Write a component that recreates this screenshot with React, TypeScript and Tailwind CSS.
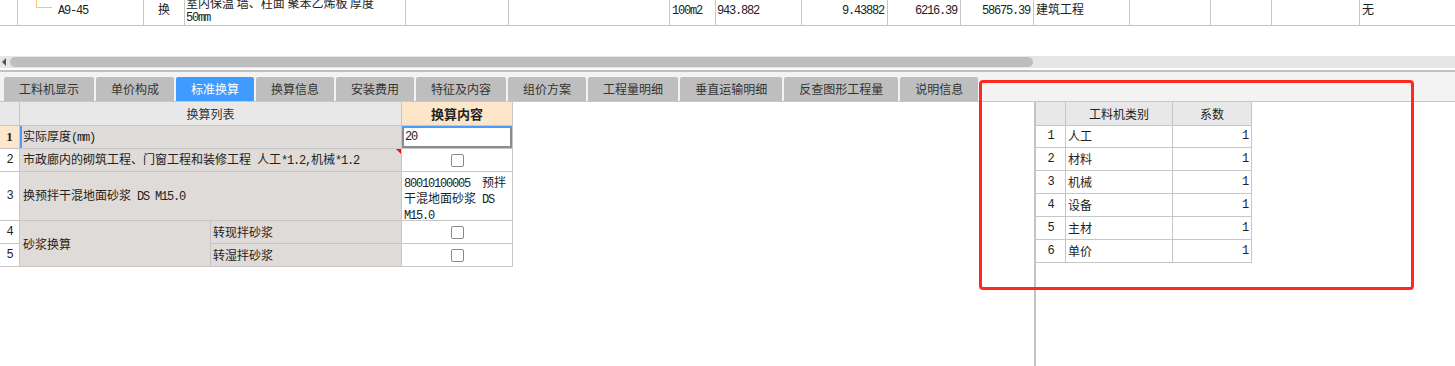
import React from "react";

const CJK = "font-['Noto_Sans_CJK_SC',sans-serif]";

function Mx({ t }: { t: string }) {
  const parts = t.split(/([\x20-\x7e]+)/).filter((p) => p.length > 0);
  return (
    <>
      {parts.map((p, i) =>
        /^[\x20-\x7e]+$/.test(p) ? (
          <span
            key={i}
            className="font-['Liberation_Mono',monospace] text-[12px] tracking-[-1.2px] whitespace-pre"
          >
            {p}
          </span>
        ) : (
          <span key={i}>{p}</span>
        )
      )}
    </>
  );
}

const G = "border-[#c6c6c6]";

function TopCell({
  w,
  children,
  cls = "",
}: {
  w: string;
  children?: React.ReactNode;
  cls?: string;
}) {
  return (
    <div className={`${w} shrink-0 h-full border-r ${G} overflow-hidden relative ${cls}`}>
      {children}
    </div>
  );
}

function Checkbox() {
  return <span className="block w-[13px] h-[13px] rounded-[2px] border border-[#8a8a8a] bg-white" />;
}

const tabs = [
  "工料机显示",
  "单价构成",
  "标准换算",
  "换算信息",
  "安装费用",
  "特征及内容",
  "组价方案",
  "工程量明细",
  "垂直运输明细",
  "反查图形工程量",
  "说明信息",
];

const rightRows = ["人工", "材料", "机械", "设备", "主材", "单价"];

export default function App() {
  return (
    <div className={`relative w-[1455px] h-[366px] overflow-hidden bg-white ${CJK} text-[12px] text-[#222]`}>
      {/* top grid row */}
      <div className={`flex h-[26px] border-b ${G} leading-[13px]`}>
        <TopCell w="w-[18px]" />
        <TopCell w="w-[126px]">
          <span className="absolute left-[18px] top-0 w-[16px] h-[8px] border-l border-b border-[#f3c47a]" />
          <span className="absolute left-[40px] top-[2px]">
            <Mx t="A9-45" />
          </span>
        </TopCell>
        <TopCell w="w-[41px]" cls="flex justify-center pt-[2px]">
          换
        </TopCell>
        <TopCell w="w-[221px]" cls="pl-[1px]">
          <div className="mt-[-4px] leading-[13px]">
            室内保温 墙、柱面 聚苯乙烯板 厚度
            <br />
            <Mx t="50mm" />
          </div>
        </TopCell>
        <TopCell w="w-[103px]" />
        <TopCell w="w-[161px]" />
        <TopCell w="w-[46px]" cls="pl-[2px] pt-[2px]">
          <Mx t="100m2" />
        </TopCell>
        <TopCell w="w-[86px]" cls="pl-[1px] pt-[2px]">
          <Mx t="943.882" />
        </TopCell>
        <TopCell w="w-[86px]" cls="text-right pr-[3px] pt-[2px]">
          <Mx t="9.43882" />
        </TopCell>
        <TopCell w="w-[73px]" cls="text-right pr-[3px] pt-[2px]">
          <Mx t="6216.39" />
        </TopCell>
        <TopCell w="w-[73px]" cls="text-right pr-[3px] pt-[2px]">
          <Mx t="58675.39" />
        </TopCell>
        <TopCell w="w-[96px]" cls="pl-[2px] pt-[2px]">
          建筑工程
        </TopCell>
        <TopCell w="w-[81px]" />
        <TopCell w="w-[61px]" />
        <TopCell w="w-[88px]" />
        <div className="flex-1 pl-[2px] pt-[2px]">无</div>
      </div>

      {/* blank area */}
      <div className="h-[30px]" />

      {/* horizontal scrollbar */}
      <div className="h-[12px] bg-[#e6e6e6] flex items-center">
        <span className="ml-[2px] w-0 h-0 border-y-[4px] border-y-transparent border-r-[4px] border-r-[#555]" />
        <span className="ml-[4px] w-[1023px] h-[10px] rounded-[5px] bg-[#bebebe]" />
      </div>
      <div className="h-[2px] bg-white" />
      <div className="h-[2px] bg-[#bfbfbf]" />

      {/* tab bar */}
      <div className={`h-[30px] bg-[#f3f3f3] border-b ${G} flex items-end pl-[4px] gap-[2px]`}>
        {tabs.map((t) => (
          <div
            key={t}
            className={`h-[24px] px-[15px] flex items-center rounded-t-[2px] leading-none ${
              t === "标准换算" ? "bg-[#3f9bff] text-white" : "bg-[#bebebe] text-[#333]"
            }`}
          >
            {t}
          </div>
        ))}
      </div>

      {/* content area */}
      <div className="flex h-[264px]">
        {/* left panel */}
        <div className="w-[1034px] shrink-0 bg-white">
          <div className="grid grid-cols-[20px_191px_191px_111px] grid-rows-[24px_23px_23px_49px_23px_23px] w-[513px] leading-[14px]">
            {/* header */}
            <div className={`col-start-1 row-start-1 bg-[#e8e8e8] border-r border-b ${G}`} />
            <div className={`col-start-2 col-span-2 row-start-1 bg-[#e8e8e8] border-r border-b ${G} flex items-center justify-center text-[#333]`}>
              换算列表
            </div>
            <div className={`col-start-4 row-start-1 bg-[#fde6c9] border-r border-b ${G} flex items-center justify-center text-[13px] font-bold text-[#222]`}>
              换算内容
            </div>

            {/* row 1 */}
            <div className={`col-start-1 row-start-2 bg-[#fde6c9] border-r border-b ${G} flex items-center justify-center font-bold font-['Liberation_Serif',serif] text-[13px]`}>
              1
            </div>
            <div className={`col-start-2 col-span-2 row-start-2 bg-[#dfdbd8] border-r border-b ${G} flex items-center pl-[3px] shadow-[inset_2px_0_0_#4a9dff]`}>
              <span>
                实际厚度<Mx t="(mm)" />
              </span>
            </div>
            <div className={`col-start-4 row-start-2 bg-white border-r border-b ${G} flex items-center pl-[3px] shadow-[inset_0_2px_0_#4a9dff,inset_2px_0_0_#8c8c8c,inset_-2px_0_0_#8c8c8c,inset_0_-2px_0_#8c8c8c]`}>
              <Mx t="20" />
            </div>

            {/* row 2 */}
            <div className={`col-start-1 row-start-3 bg-white border-r border-b ${G} flex items-center justify-center`}>
              <Mx t="2" />
            </div>
            <div className={`relative col-start-2 col-span-2 row-start-3 bg-[#dfdbd8] border-r border-b ${G} flex items-center pl-[3px] whitespace-nowrap`}>
              <span>
                <Mx t="市政廊内的砌筑工程、门窗工程和装修工程 人工*1.2,机械*1.2" />
              </span>
              <span className="absolute top-0 right-0 w-0 h-0 border-t-[5px] border-t-[#ee1111] border-l-[5px] border-l-transparent" />
            </div>
            <div className={`col-start-4 row-start-3 bg-white border-r border-b ${G} flex items-center justify-center`}>
              <Checkbox />
            </div>

            {/* row 3 */}
            <div className={`col-start-1 row-start-4 bg-white border-r border-b ${G} flex items-center justify-center`}>
              <Mx t="3" />
            </div>
            <div className={`col-start-2 col-span-2 row-start-4 bg-[#dfdbd8] border-r border-b ${G} flex items-center pl-[3px]`}>
              <span>
                <Mx t="换预拌干混地面砂浆 DS M15.0" />
              </span>
            </div>
            <div className={`col-start-4 row-start-4 bg-white border-r border-b ${G} pl-[2px] pt-[3px] whitespace-nowrap`}>
              <Mx t="80010100005  预拌" />
              <br />
              <Mx t="干混地面砂浆 DS" />
              <br />
              <Mx t="M15.0" />
            </div>

            {/* row 4 / 5 */}
            <div className={`col-start-1 row-start-5 bg-white border-r border-b ${G} flex items-center justify-center`}>
              <Mx t="4" />
            </div>
            <div className={`col-start-2 row-start-5 row-span-2 bg-[#dfdbd8] border-r border-b ${G} flex items-center pl-[3px]`}>
              砂浆换算
            </div>
            <div className={`col-start-3 row-start-5 bg-[#dfdbd8] border-r border-b ${G} flex items-center pl-[2px]`}>
              转现拌砂浆
            </div>
            <div className={`col-start-4 row-start-5 bg-white border-r border-b ${G} flex items-center justify-center`}>
              <Checkbox />
            </div>

            <div className={`col-start-1 row-start-6 bg-white border-r border-b ${G} flex items-center justify-center`}>
              <Mx t="5" />
            </div>
            <div className={`col-start-3 row-start-6 bg-[#dfdbd8] border-r border-b ${G} flex items-center pl-[2px]`}>
              转湿拌砂浆
            </div>
            <div className={`col-start-4 row-start-6 bg-white border-r border-b ${G} flex items-center justify-center`}>
              <Checkbox />
            </div>
          </div>
        </div>

        {/* right panel */}
        <div className="flex-1 border-l-2 border-[#c3c3c3] bg-white">
          <div className="grid grid-cols-[30px_107px_79px] auto-rows-[23px] w-[216px] leading-[14px]">
            <div className={`h-[24px] bg-[#e8e8e8] border-r border-b ${G}`} />
            <div className={`h-[24px] bg-[#e8e8e8] border-r border-b ${G} flex items-center justify-center`}>
              工料机类别
            </div>
            <div className={`h-[24px] bg-[#e8e8e8] border-r border-b ${G} flex items-center justify-center`}>
              系数
            </div>
            {rightRows.map((r, i) => (
              <React.Fragment key={r}>
                <div className={`border-r border-b ${G} flex items-center justify-center`}>
                  <Mx t={String(i + 1)} />
                </div>
                <div className={`border-r border-b ${G} flex items-center pl-[2px]`}>{r}</div>
                <div className={`border-r border-b ${G} flex items-center justify-end pr-[3px]`}>
                  <Mx t="1" />
                </div>
              </React.Fragment>
            ))}
          </div>
        </div>
      </div>

      {/* red annotation frame */}
      <div className="absolute left-[979px] top-[80px] w-[435px] h-[210px] border-[3px] border-[#ff2a1f] rounded-[4px] pointer-events-none" />
    </div>
  );
}
